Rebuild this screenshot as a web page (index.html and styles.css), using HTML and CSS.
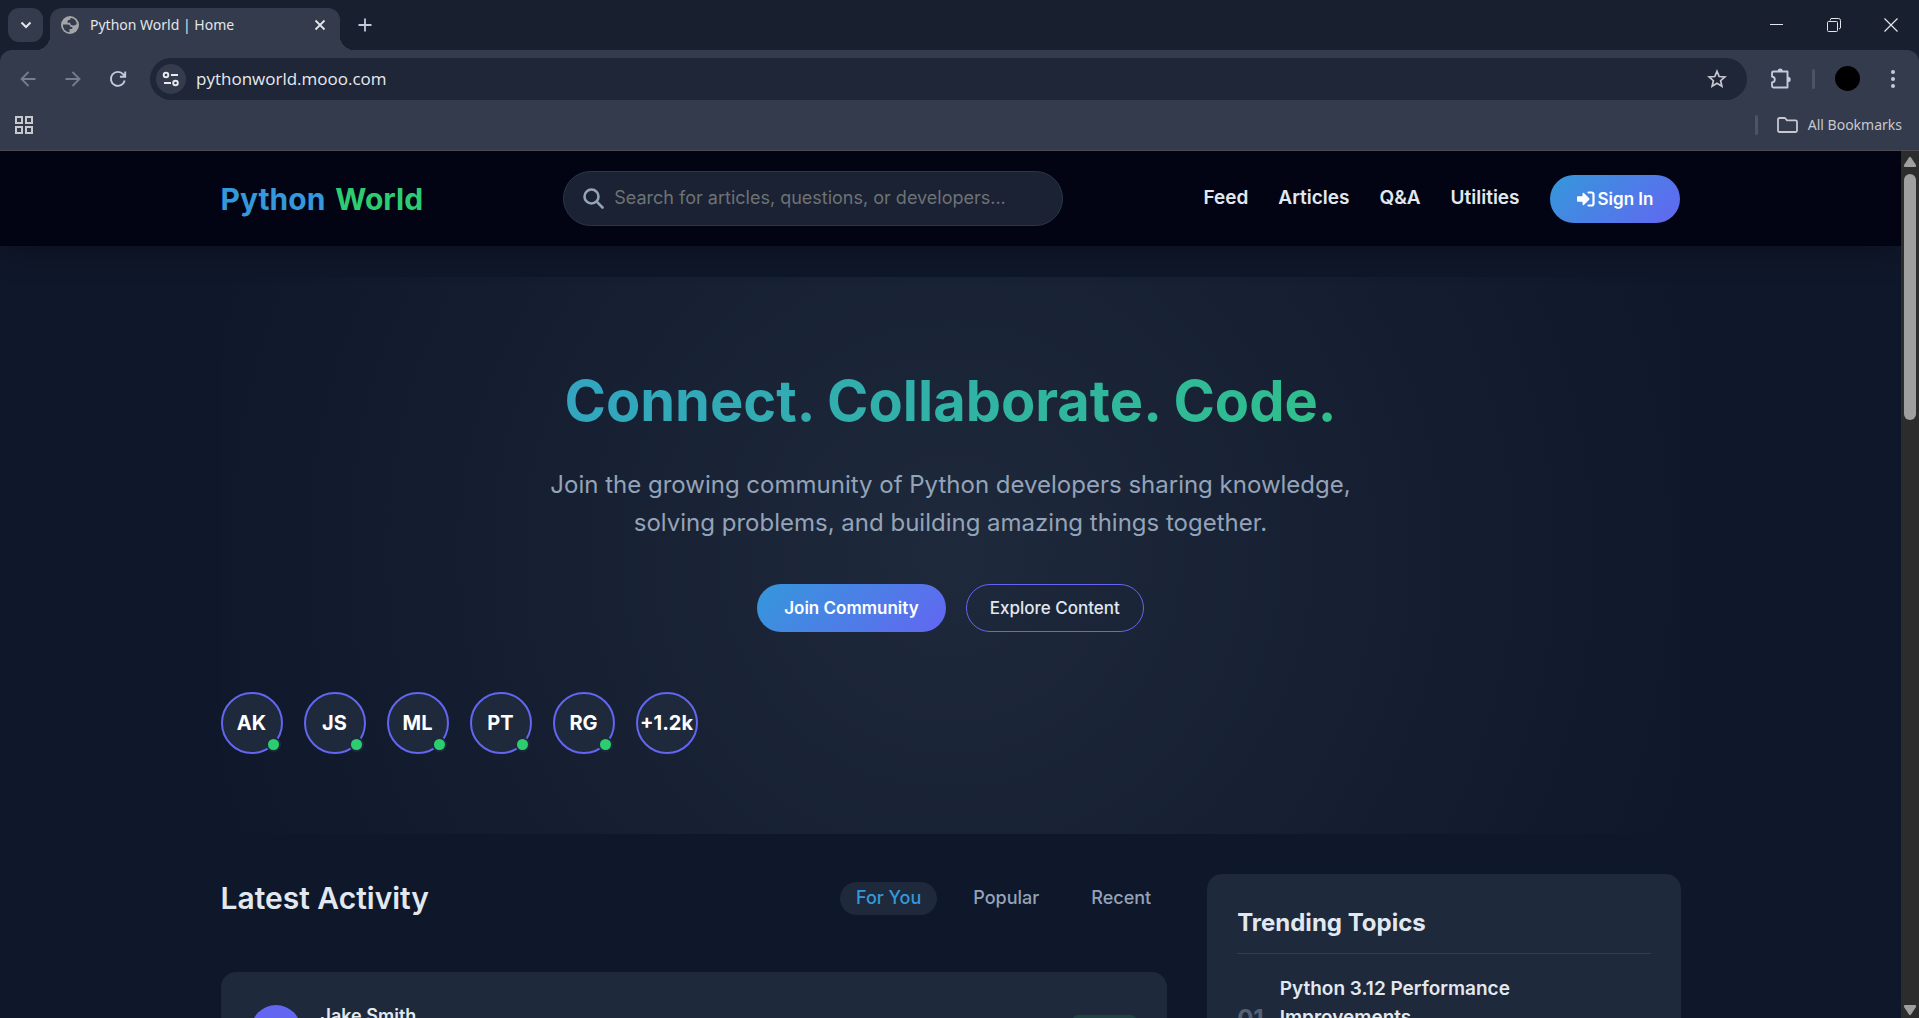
FILE: index.html
```html
<!DOCTYPE html>
<html lang="en">
<head>
<meta charset="utf-8">
<meta name="viewport" content="width=device-width, initial-scale=1">
<title>Python World | Home</title>
<link rel="stylesheet" href="styles.css">
</head>
<body>
<div class="browser">
  <div class="tab-strip">
    <button class="tab-search" aria-label="Search tabs"><svg width="12" height="12" viewBox="0 0 12 12" fill="none" stroke="currentColor" stroke-width="2"><path d="M1.500 3.500 6 8l4.500-4.500"/></svg></button>
    <div class="tab">
      <svg class="favicon" width="18" height="18" viewBox="0 0 18 18"><circle cx="9" cy="9" r="9" fill="currentColor"/><path d="M2 8.500h4.500c2 0 3 1 3 2.500h1.800v2H8.500v3.200C4.500 16 1.800 13 2 8.500zM10.500 2c-1 .2-1.300.9-1.300 1.700-1.500 0-2.700.5-2.700 1.600v1.400h2.700c0 1.700 1 2.800 2.800 2.800 1.500 0 2.500-.500 3.800-1.500C15.400 4.800 13.500 2.500 10.500 2z" fill="#333b4c"/></svg>
      <span class="tab-title">Python World | Home</span>
      <button class="tab-close" aria-label="Close tab"><svg width="12" height="12" viewBox="0 0 12 12" stroke="currentColor" stroke-width="1.800"><path d="m1.500 1.500 9 9m0-9-9 9"/></svg></button>
    </div>
    <button class="new-tab" aria-label="New tab"><svg width="14" height="14" viewBox="0 0 14 14" stroke="currentColor" stroke-width="1.800"><path d="M7 .500v13M.500 7h13"/></svg></button>
    <div class="window-controls">
      <button aria-label="Minimize"><svg width="14" height="14" viewBox="0 0 14 14" stroke="currentColor"><path d="M0 6.500h13"/></svg></button>
      <button aria-label="Restore"><svg width="14" height="14" viewBox="0 0 14 14" fill="none" stroke="currentColor"><rect x=".5" y="3.500" width="10" height="10" rx="1"/><path d="M3 2.500 4 .500h7.500a2 2 0 0 1 2 2V10l-1.500 1"/></svg></button>
      <button aria-label="Close"><svg width="14" height="14" viewBox="0 0 14 14" stroke="currentColor" stroke-width="1.200"><path d="m.5.5 13 13m0-13-13 13"/></svg></button>
    </div>
  </div>
  <div class="toolbar">
    <button class="tool dim" aria-label="Back"><svg width="16" height="16" viewBox="0 0 16 16" fill="none" stroke="currentColor" stroke-width="1.800"><path d="M15.500 8H2M8.500 1 1.500 8l7 7"/></svg></button>
    <button class="tool dim" aria-label="Forward"><svg width="16" height="16" viewBox="0 0 16 16" fill="none" stroke="currentColor" stroke-width="1.800"><path d="M.500 8H14M7.500 1l7 7-7 7"/></svg></button>
    <button class="tool" aria-label="Reload"><svg width="18" height="18" viewBox="0 0 18 18" fill="none" stroke="currentColor" stroke-width="1.900"><path d="M15.700 10.500A7 7 0 1 1 14.300 4.400L16 6.500M16.200 1.500v5.300h-5.300"/></svg></button>
    <div class="omnibox">
      <button class="site-info" aria-label="Site information"><svg width="18" height="16" viewBox="0 0 18 16" fill="none" stroke="currentColor" stroke-width="1.900"><circle cx="4" cy="4" r="2.300"/><path d="M9 4h7M2 12h7"/><circle cx="13.500" cy="12" r="2.300"/></svg></button>
      <input class="address" type="text" value="pythonworld.mooo.com" aria-label="Address">
      <button class="star" aria-label="Bookmark this page"><svg width="20" height="20" viewBox="0 0 20 20" fill="none" stroke="currentColor" stroke-width="1.700"><path d="m10 2.300 2.200 5.200 5.700.500-4.300 3.700 1.300 5.600L10 14.300l-4.900 3 1.300-5.600L2.100 8l5.700-.500z"/></svg></button>
    </div>
    <button class="extensions" aria-label="Extensions"><svg width="22" height="22" viewBox="0 0 22 22"><path d="M3.500 3.500h14v16h-14a1.500 1.500 0 0 1-1.500-1.500v-3.500c1.800-.300 2.800-1.300 2.800-3s-1-2.700-2.800-3V5a1.500 1.500 0 0 1 1.500-1.500z" fill="none" stroke="currentColor" stroke-width="1.900" stroke-linejoin="round"/><path d="M7.600 3.200a2.600 2.600 0 0 1 5.200 0zM18 8.700a2.700 2.700 0 0 1 0 5.400z" fill="currentColor"/></svg></button>
    <span class="divider"></span>
    <button class="profile" aria-label="Profile"></button>
    <button class="menu" aria-label="Menu"><svg width="4" height="18" viewBox="0 0 4 18" fill="currentColor"><circle cx="2" cy="2" r="2"/><circle cx="2" cy="9" r="2"/><circle cx="2" cy="16" r="2"/></svg></button>
  </div>
  <div class="bookmarks">
    <button class="apps" aria-label="Apps"><svg width="18" height="18" viewBox="0 0 18 18" fill="none" stroke="currentColor" stroke-width="2"><path d="M1 1h6v6H1zM11 1h6v6h-6zM1 11h6v6H1zM11 11h6v6h-6z"/></svg></button>
    <span class="divider"></span>
    <button class="all-bookmarks"><svg width="21" height="16" viewBox="0 0 21 16" fill="none" stroke="currentColor" stroke-width="1.800" stroke-linejoin="round"><path d="M1 2.500A1.500 1.500 0 0 1 2.500 1H8l2 2.300h8.500A1.500 1.500 0 0 1 20 4.800v8.700a1.500 1.500 0 0 1-1.500 1.500h-16A1.500 1.500 0 0 1 1 13.500z"/></svg>All Bookmarks</button>
  </div>
</div>
<div class="viewport">
  <div class="page">
    <header class="site-header">
      <div class="container header-row">
        <a class="logo" href="#"><span>Python</span> <span class="logo-accent">World</span></a>
        <label class="search">
          <svg width="21" height="21" viewBox="0 0 21 21" fill="none" stroke="currentColor" stroke-width="2.600" stroke-linecap="round"><circle cx="8.500" cy="8.500" r="7"/><path d="m13.700 13.700 5.800 5.800"/></svg>
          <input type="search" placeholder="Search for articles, questions, or developers..." aria-label="Search">
        </label>
        <nav class="nav">
          <a href="#">Feed</a>
          <a href="#">Articles</a>
          <a href="#">Q&amp;A</a>
          <a href="#">Utilities</a>
          <button class="btn btn-primary sign-in"><svg width="18" height="16" viewBox="0 0 18 16"><path d="M.8 5.300h4.700V2.700c0-.8.8-1.100 1.400-.6l5.300 5.200c.4.400.4 1 0 1.400l-5.300 5.200c-.6.500-1.400.2-1.400-.6v-2.600H.8A.8.800 0 0 1 0 9.900V6.100c0-.4.400-.8.800-.8z" fill="currentColor"/><path d="M11.500 1.500h3a2 2 0 0 1 2 2v9a2 2 0 0 1-2 2h-3" fill="none" stroke="currentColor" stroke-width="2.200" stroke-linecap="round"/></svg>Sign In</button>
        </nav>
      </div>
    </header>
    <main class="container">
      <section class="hero">
        <h1>Connect. Collaborate. Code.</h1>
        <p>Join the growing community of Python developers sharing knowledge, solving problems, and building amazing things together.</p>
        <div class="hero-actions">
          <button class="btn btn-primary">Join Community</button>
          <button class="btn btn-outline">Explore Content</button>
        </div>
        <ul class="members">
          <li class="online">AK</li>
          <li class="online">JS</li>
          <li class="online">ML</li>
          <li class="online">PT</li>
          <li class="online">RG</li>
          <li>+1.2k</li>
        </ul>
      </section>
      <div class="columns">
        <section class="feed">
          <div class="feed-head">
            <h2>Latest Activity</h2>
            <div class="filters">
              <button class="active">For You</button>
              <button>Popular</button>
              <button>Recent</button>
            </div>
          </div>
          <article class="card post">
            <span class="post-avatar"></span>
            <div class="post-author"><h3>Jake Smith</h3></div>
            <span class="post-badge"></span>
          </article>
        </section>
        <aside class="card trending">
          <h2>Trending Topics</h2>
          <ol>
            <li><span class="rank">01</span><h3>Python 3.12 Performance Improvements</h3></li>
          </ol>
        </aside>
      </div>
    </main>
  </div>
  <div class="scrollbar">
    <svg width="14" height="12" viewBox="0 0 14 12" fill="currentColor"><path d="M6 1.500q1-1.500 2 0l5 7.500q.8 2-1 2H2q-1.800 0-1-2z"/></svg>
    <span class="thumb"></span>
    <svg width="14" height="12" viewBox="0 0 14 12" fill="currentColor"><path d="M6 10.500q1 1.500 2 0l5-7.500q.8-2-1-2H2q-1.800 0-1 2z"/></svg>
  </div>
</div>
</body>
</html>
```
FILE: styles.css
```css
* { box-sizing: border-box; margin: 0; padding: 0; }

body {
  display: flex;
  flex-direction: column;
  height: 100vh;
  overflow: hidden;
  background: #0f172a;
  color: #e2e8f0;
  font-family: Inter, "Liberation Sans", sans-serif;
  font-size: 18px;
  line-height: 1.6;
}

button, input { font: inherit; color: inherit; background: none; border: 0; outline: 0; }
button { display: inline-flex; align-items: center; justify-content: center; white-space: nowrap; }
a { color: inherit; text-decoration: none; }
ul, ol { list-style: none; }
svg { display: block; flex: none; }

/* Browser frame */
.browser {
  flex: none;
  background: #18202f;
  color: #e3e5ea;
  font-family: "Noto Sans", "Open Sans", sans-serif;
  font-size: 14px;
  line-height: 20px;
  border-bottom: 1px solid #4a4c51;
}
.tab-strip { display: flex; height: 50px; padding: 8px 0 0 8px; }
.tab-search { width: 35px; height: 34px; border-radius: 11px; background: #333b4c; }
.tab {
  position: relative;
  display: flex;
  align-items: center;
  gap: 11px;
  width: 290px;
  margin-left: 7px;
  padding: 0 14px 8px 11px;
  border-radius: 12px 12px 0 0;
  background: #333b4c;
}
.tab::before, .tab::after {
  content: "";
  position: absolute;
  bottom: 0;
  width: 14px;
  height: 14px;
}
.tab::before { right: 100%; background: radial-gradient(circle at 0 0, transparent 14px, #333b4c 14px); }
.tab::after { left: 100%; background: radial-gradient(circle at 100% 0, transparent 14px, #333b4c 14px); }
.favicon { color: #a3a5a8; }
.tab-title { flex: 1; white-space: nowrap; }
.new-tab { width: 50px; height: 34px; color: #c3cadf; }
.window-controls { display: flex; margin-left: auto; }
.window-controls button { width: 57px; height: 33px; }

.toolbar {
  display: flex;
  align-items: center;
  height: 57px;
  padding: 0 17px 0 5px;
  border-radius: 12px 12px 0 0;
  background: #333b4c;
  color: #c3cadf;
}
.tool { width: 45px; height: 40px; }
.dim { color: #767d8d; }
.omnibox {
  display: flex;
  flex: 1;
  align-items: center;
  height: 42px;
  margin: 0 23px 0 10px;
  padding: 0 20px 0 6px;
  border-radius: 21px;
  background: #1e2637;
  color: #e8eaef;
}
.site-info { width: 30px; height: 30px; border-radius: 50%; background: #333b4c; }
.address { flex: 1; margin: 0 10px; font-family: "Open Sans", "Noto Sans", sans-serif; font-size: 17px; line-height: 24px; }
.star { color: #c7c8ce; }
.divider { width: 3px; height: 20px; border-radius: 2px; background: #4c5466; }
.extensions { margin-right: 20px; }
.profile { width: 25px; height: 25px; margin: 0 31px 0 20px; border-radius: 50%; background: #000; }
.menu { padding: 0 7px 0 0; }

.bookmarks {
  display: flex;
  align-items: center;
  height: 43px;
  padding: 0 17px 7px 15px;
  background: #333b4c;
  color: #c7c8ce;
}
.bookmarks .divider { margin-left: auto; }
.all-bookmarks { gap: 10px; margin-left: 19px; }

/* Page */
.viewport { display: flex; flex: 1; min-height: 0; }
.page { flex: 1; overflow: hidden; }
.scrollbar {
  display: flex;
  flex-direction: column;
  align-items: center;
  width: 18px;
  padding: 5px 0 2px;
  background: #2c2c2c;
  color: #9f9f9f;
}
.thumb { width: 12px; height: 246px; margin: 6px 0 auto; border-radius: 6px; background: #9f9f9f; }
.container { max-width: 1500px; margin: 0 auto; padding: 0 20px; }

.site-header {
  position: relative;
  background: #020414;
  box-shadow: 0 4px 30px rgba(0, 0, 0, 0.3);
}
.header-row { display: flex; align-items: center; justify-content: space-between; padding-top: 20px; padding-bottom: 20px; }
.logo { display: flex; gap: 10px; color: #3498db; font-size: 30px; font-weight: 700; line-height: 46px; }
.logo-accent { color: #2ecc71; }
.search {
  display: flex;
  align-items: center;
  gap: 10px;
  width: 500px;
  height: 55px;
  padding: 0 19px;
  border: 1px solid #2c3648;
  border-radius: 28px;
  background: #1a2233;
  color: #94a3b8;
}
.search input { flex: 1; min-width: 0; }
.search input::placeholder { color: #6f7275; opacity: 1; }
.nav { display: flex; align-items: center; gap: 30px; font-size: 19px; font-weight: 600; }
.btn { height: 48px; border-radius: 24px; font-size: 17px; line-height: 24px; }
.btn-primary { padding: 0 27px; background: linear-gradient(135deg, #3498db, #6366f1); color: #fff; font-weight: 600; }
.btn-outline { padding: 0 23px; border: 1px solid #6366f1; font-weight: 500; }
.sign-in { gap: 3px; }

.hero {
  margin-top: 31px;
  padding: 80px 0;
  background: radial-gradient(circle at center, #1e293b 0%, rgba(30, 41, 59, 0) 100%);
}
.hero h1 {
  margin-bottom: 20px;
  background: linear-gradient(135deg, #3498db, #2ecc71);
  background-clip: text;
  -webkit-background-clip: text;
  color: transparent;
  font-size: 56px;
  font-weight: 700;
  line-height: 89px;
  text-align: center;
}
.hero p { max-width: 820px; margin: 0 auto 42px; color: #94a3b8; font-size: 24px; line-height: 38px; text-align: center; }
.hero-actions { display: flex; justify-content: center; gap: 20px; margin-bottom: 60px; }
.members { display: flex; gap: 21px; }
.members li {
  position: relative;
  display: flex;
  align-items: center;
  justify-content: center;
  width: 62px;
  height: 62px;
  border: 2px solid #6366f1;
  border-radius: 50%;
  background: #1e293b;
  color: #fff;
  font-size: 20px;
  font-weight: 700;
}
.members .online::after {
  content: "";
  position: absolute;
  right: 2px;
  bottom: 2px;
  width: 11px;
  height: 11px;
  border-radius: 50%;
  background: #2ecc71;
  box-shadow: 0 0 0 2px #1e293b;
}

.columns { display: grid; grid-template-columns: 2fr 1fr; gap: 40px; align-items: start; margin-top: 40px; }
.card { padding: 30px; border-radius: 15px; background: #1e293b; }
.feed-head { display: flex; align-items: center; justify-content: space-between; margin-bottom: 49px; }
.feed-head h2 { font-size: 30px; font-weight: 600; line-height: 49px; }
.filters { display: flex; gap: 20px; }
.filters button { height: 33px; padding: 0 16px; border-radius: 17px; color: #94a3b8; font-weight: 500; }
.filters .active { background: #1e293b; color: #3498db; }
.post { display: flex; align-items: center; gap: 20px; }
.post-avatar { width: 50px; height: 50px; border-radius: 50%; background: #6366f1; }
.post-author { height: 56px; }
.card h3 { font-size: 18px; font-weight: 600; }
.post-badge { width: 65px; height: 30px; margin-left: auto; border-radius: 6px; background: #20443f; }
.trending h2 { padding-bottom: 11px; border-bottom: 1px solid #323d4f; font-size: 24px; font-weight: 700; }
.trending li { display: flex; gap: 16px; align-items: center; height: 90px; margin-top: 20px; }
.trending h3 { align-self: flex-start; max-width: 260px; font-size: 19px; line-height: 29px; }
.rank { color: #566173; font-size: 24px; font-weight: 700; }
```
